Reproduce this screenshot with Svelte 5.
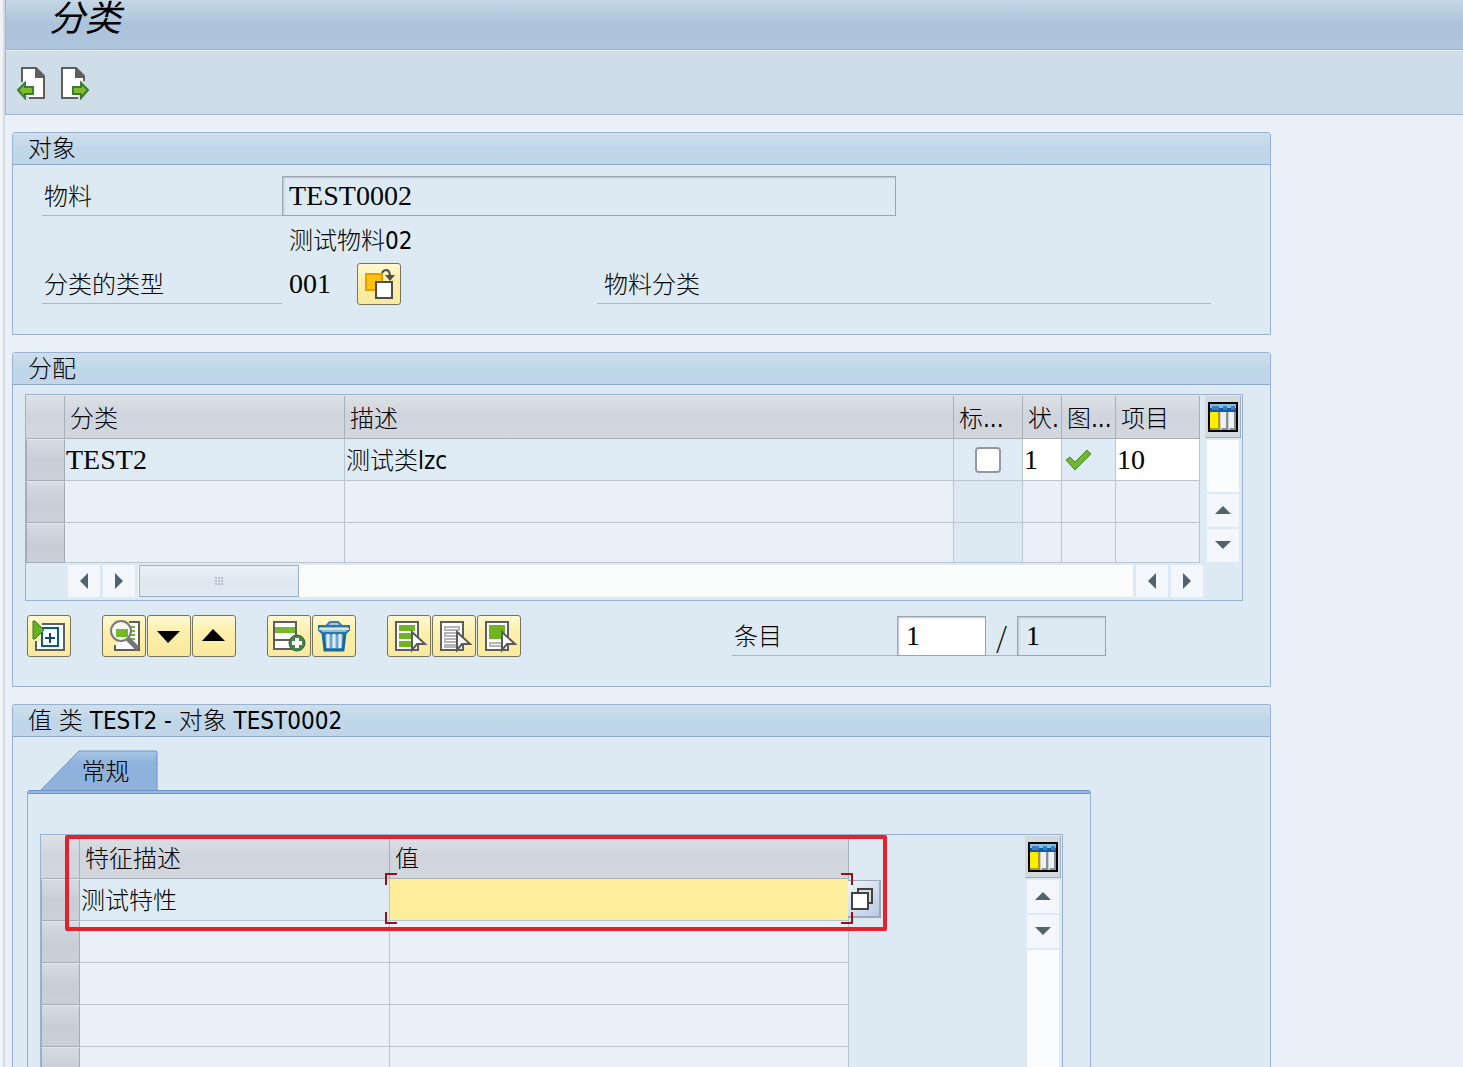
<script lang="ts">
  interface ClassRow {
    name: string;
    description: string;
    standard: boolean;
    status: string;
    item: string;
  }

  const classRows: (ClassRow | null)[] = [
    { name: "TEST2", description: "测试类lzc", standard: false, status: "1", item: "10" },
    null,
    null,
  ];

  const valueRows: (string | null)[] = ["测试特性", null, null, null, null, null];

  const actionGroups = [
    [{ icon: "assign", label: "新分配" }],
    [
      { icon: "find", label: "查找" },
      { icon: "next", label: "下一个" },
      { icon: "previous", label: "上一个" },
    ],
    [
      { icon: "insert", label: "插入行" },
      { icon: "trash", label: "删除" },
    ],
    [
      { icon: "selectAll", label: "全选" },
      { icon: "deselect", label: "取消选择" },
      { icon: "selectBlock", label: "选择块" },
    ],
  ];

  const arrows: Record<string, string> = {
    up: "M0 11 8 3l8 8z",
    down: "M0 3h16l-8 8z",
    left: "M12 0v16L4 8z",
    right: "M4 0v16l8-8z",
  };

  let material = $state("TEST0002");
  let entry = $state("1");
  let entryTotal = $state("1");
  let value = $state("");
</script>

{#snippet arrowButton(dir: string, label: string)}
  <button class="scroll-btn" aria-label={label}>
    <svg width="16" height="16" viewBox="0 0 16 16"><path d={arrows[dir]} fill="#53636e" /></svg>
  </button>
{/snippet}

{#snippet configButton()}
  <button class="config-btn" aria-label="表格设置">
    <svg width="30" height="30" viewBox="0 0 30 30" shape-rendering="crispEdges">
      <path d="M0 0h30v30H0z" fill="#000" />
      <path d="M2 2h26v8H2z" fill="#7fc0e8" />
      <path d="M2 6h26v4H2z" fill="#0a60a8" />
      <path d="M4 4h7v4H4zM15 4h4v4h-4zM23 4h4v4h-4z" fill="#4a78b8" />
      <path d="M2 10h26v18H2z" fill="#c9cfd4" />
      <path d="M2 10h8v16H2z" fill="#ffee00" />
      <path d="M10 10h2v18H2v-2h8z" fill="#b3a000" />
      <path d="M13 10h5v16h-5zM21 10h5v16h-5z" fill="#eef0f2" />
      <path d="M18 10h2v18h-6v-2h4zM26 10h2v18h-6v-2h4z" fill="#888e93" />
    </svg>
  </button>
{/snippet}

{#snippet cursor()}
  <path d="M25 17v18l5-6h8z" fill="#fff" stroke="#595959" stroke-width="2" />
{/snippet}

{#snippet icon(name: string)}
  <svg width="44" height="42" viewBox="0 0 44 42">
    {#if name === "assign"}
      <path d="M9 9h28v26H9z" fill="#fff" stroke="#5e5e5e" stroke-width="2" />
      <path d="M7 7h8v19H7z" fill="#fdf0b4" />
      <path d="M15 13h16v18H15z" fill="#fff" stroke="#005f92" stroke-width="2" />
      <path d="M18 23h10M23 18v10" stroke="#163f86" stroke-width="2" />
      <path d="M6 6v18h2l9-9-9-9z" fill="#6ab023" stroke="#397d25" />
    {:else if name === "find"}
      <path d="M13 7h24v28H13z" fill="#fff" stroke="#5e5e5e" stroke-width="2" />
      <path d="M11 5h16v3H11zM11 8h5v22h-5z" fill="#fdf0ad" />
      <path d="M27 12h6M27 16h6M27 20h6M27 24h6" stroke="#79b928" stroke-width="2" />
      <circle cx="19" cy="16" r="10" fill="#f3f6f2" stroke="#7a7a7a" stroke-width="2" />
      <path d="M14 14h12v8H14z" fill="#76b82a" />
      <path d="m26 24 10 10" stroke="#757575" stroke-width="5" />
    {:else if name === "next"}
      <path d="M10 16h23L21 28z" />
    {:else if name === "previous"}
      <path d="M10 26h23L21 14z" />
    {:else if name === "insert"}
      <path d="M7 7h22v27H7z" fill="#fff" stroke="#5e5e5e" stroke-width="2" />
      <path d="M8 12h20v6H8z" fill="#76b82a" />
      <path d="M7 25h22" stroke="#5e5e5e" stroke-width="2" />
      <circle cx="30" cy="28" r="8" fill="#4d7f4d" stroke="#286a31" />
      <path d="M25 28h10M30 23v10" stroke="#fff" stroke-width="4" />
    {:else if name === "trash"}
      <path d="M11 18h22l-2 17H13z" fill="#6ea5ce" stroke="#176a9d" stroke-width="3" />
      <path d="M16 19v14M22 19v14M28 19v14" stroke="#e2edf6" stroke-width="3" />
      <path d="M14 11l4-4h8l4 4" fill="#a9c6de" stroke="#3b7eae" stroke-width="2" />
      <path d="M7 11h30v4l-3 3H10l-3-3z" fill="#8fbcd9" stroke="#2777ab" stroke-width="2" />
      <path d="M7 14h30" stroke="#e0e6cb" stroke-width="2" />
    {:else if name === "selectAll"}
      <path d="M9 7h22v28H9z" fill="#fff" stroke="#5e5e5e" stroke-width="2" />
      <path d="M12 10h16v6H12zM12 18h16v6H12zM12 26h16v6H12z" fill="#6fb522" />
      {@render cursor()}
    {:else if name === "deselect"}
      <path d="M9 7h22v28H9z" fill="#fff" stroke="#5e5e5e" stroke-width="2" />
      <path d="M13 12h14v3H13zM13 18h14v3H13zM13 24h14v3H13zM13 30h14v2H13z" fill="#fff" stroke="#b5b5b5" stroke-width="2" />
      {@render cursor()}
    {:else if name === "selectBlock"}
      <path d="M9 7h22v28H9z" fill="#fff" stroke="#5e5e5e" stroke-width="2" />
      <path d="M12 10h16v14H12z" fill="#6fb522" />
      <path d="M13 28h14v3H13z" fill="#fff" stroke="#b5b5b5" stroke-width="2" />
      {@render cursor()}
    {:else if name === "classType"}
      <path d="M9 11h16v16H9z" fill="#ffc20e" stroke="#e99b00" stroke-width="2" />
      <path d="M19 19h16v16H19z" fill="#fff" stroke="#4d4d4d" stroke-width="2" />
      <path d="M25 10q1-3 5-3 3 1 3 7" fill="none" stroke="#4d4d4d" stroke-width="2" />
      <path d="M28 12h10l-5 6z" fill="#4d4d4d" />
    {/if}
  </svg>
{/snippet}

<div class="window">
  <header class="title-bar">
    <h1>分类</h1>
  </header>

  <nav class="app-toolbar">
    <button aria-label="上一个对象">
      <svg width="30" height="34" viewBox="0 0 30 34">
        <path d="M5 2h14l8 8v22H5z" fill="#fff" stroke="#5e5e5e" stroke-width="2" />
        <path d="M18 1v11h10z" fill="#5e5e5e" />
        <path d="M3 16h4v17H3zM7 30h5v3H7z" fill="#cfdde8" />
        <path d="m1 24 7-7v4h8v7H8v4z" fill="#80bb2c" stroke="#397d35" stroke-width="2" />
      </svg>
    </button>
    <button aria-label="下一个对象">
      <svg width="30" height="34" viewBox="0 0 30 34">
        <path d="M2 2h14l8 8v22H2z" fill="#fff" stroke="#5e5e5e" stroke-width="2" />
        <path d="M15 1v11h10z" fill="#5e5e5e" />
        <path d="M21 15h5v18h-8v-3z" fill="#cfdde8" />
        <path d="m28 24-7-7v4h-8v7h8v4z" fill="#80bb2c" stroke="#397d35" stroke-width="2" />
      </svg>
    </button>
  </nav>

  <main>
    <section class="panel">
      <h2>对象</h2>
      <div class="object-form">
        <div class="row">
          <label class="label" for="material">物料</label>
          <input id="material" class="field wide fixed" bind:value={material} readonly />
        </div>
        <p class="material-name">测试物料02</p>
        <div class="row">
          <span class="label">分类的类型</span>
          <span class="type-code">001</span>
          <button class="action" aria-label="更改分类类型">{@render icon("classType")}</button>
          <span class="type-text">物料分类</span>
        </div>
      </div>
    </section>

    <section class="panel">
      <h2>分配</h2>
      <div class="grid-frame">
        <div class="grid-body">
          <table>
            <colgroup>
              <col class="c-sel" />
              <col class="c-class" />
              <col />
              <col class="c-std" />
              <col class="c-status" />
              <col class="c-icon" />
              <col class="c-item" />
            </colgroup>
            <thead>
              <tr>
                <th class="corner"></th>
                <th>分类</th>
                <th>描述</th>
                <th>标...</th>
                <th>状.</th>
                <th>图...</th>
                <th>项目</th>
              </tr>
            </thead>
            <tbody>
              {#each classRows as row}
                <tr class:filled={row}>
                  <td class="selector"></td>
                  {#if row}
                    <td class="mono">{row.name}</td>
                    <td>{row.description}</td>
                    <td class="center"><input type="checkbox" checked={row.standard} aria-label="标准类" /></td>
                    <td class="edit"><input class="mono" value={row.status} aria-label="状态" /></td>
                    <td class="center">
                      <svg class="check" width="28" height="24" viewBox="0 0 28 24">
                        <path d="m2 12 4-3 5 5L23 2l4 4-16 16z" fill="#73b72b" stroke="#3f8a35" />
                      </svg>
                    </td>
                    <td class="edit"><input class="mono" value={row.item} aria-label="项目" /></td>
                  {:else}
                    <td></td>
                    <td></td>
                    <td class="tinted"></td>
                    <td></td>
                    <td></td>
                    <td></td>
                  {/if}
                </tr>
              {/each}
            </tbody>
          </table>
          <div class="v-scroll">
            {@render configButton()}
            <div class="v-track"></div>
            {@render arrowButton("up", "向上滚动")}
            {@render arrowButton("down", "向下滚动")}
          </div>
        </div>
        <div class="h-scroll">
          {@render arrowButton("left", "向左滚动")}
          {@render arrowButton("right", "向右滚动")}
          <div class="h-track">
            <div class="thumb">
              <svg width="8" height="8" viewBox="0 0 8 8" shape-rendering="crispEdges">
                <path d="M0 0h2v2H0zM3 0h2v2H3zM6 0h2v2H6zM0 3h2v2H0zM3 3h2v2H3zM6 3h2v2H6zM0 6h2v2H0zM3 6h2v2H3zM6 6h2v2H6z" fill="#b4c1ce" />
              </svg>
            </div>
          </div>
          {@render arrowButton("left", "向左滚动")}
          {@render arrowButton("right", "向右滚动")}
        </div>
      </div>

      <div class="grid-actions">
        {#each actionGroups as group}
          <div class="group">
            {#each group as action}
              <button class="action" aria-label={action.label}>{@render icon(action.icon)}</button>
            {/each}
          </div>
        {/each}
        <div class="entries">
          <label class="label" for="entry">条目</label>
          <input id="entry" class="field small" bind:value={entry} />
          <span class="slash">/</span>
          <input class="field small fixed" bind:value={entryTotal} readonly aria-label="条目总数" />
        </div>
      </div>
    </section>

    <section class="panel values">
      <h2>值 类 TEST2 - 对象 TEST0002</h2>
      <div class="tabs">
        <button class="tab">
          <svg width="119" height="40" viewBox="0 0 119 40">
            <defs>
              <linearGradient id="tab-fill" x1="0" y1="0" x2="0" y2="1">
                <stop offset="0" stop-color="#a9c6e4" />
                <stop offset="0.3" stop-color="#8db2dc" />
                <stop offset="1" stop-color="#90b1da" />
              </linearGradient>
            </defs>
            <path d="M1 41 40 1h77l1 1v39" fill="url(#tab-fill)" stroke="#6a93c4" />
          </svg>
          <span>常规</span>
        </button>
      </div>
      <div class="tab-page">
        <div class="value-frame">
          <table>
            <colgroup>
              <col class="c-sel" />
              <col class="c-trait" />
              <col />
            </colgroup>
            <thead>
              <tr>
                <th class="corner"></th>
                <th>特征描述</th>
                <th>值</th>
              </tr>
            </thead>
            <tbody>
              {#each valueRows as row}
                <tr class:filled={row}>
                  <td class="selector"></td>
                  <td>{row ?? ""}</td>
                  {#if row}
                    <td class="focused">
                      <input bind:value aria-label={row} />
                      <span class="bracket tl"></span>
                      <span class="bracket tr"></span>
                      <span class="bracket bl"></span>
                      <span class="bracket br"></span>
                      <button class="match" aria-label="可能的输入">
                        <svg width="24" height="24" viewBox="0 0 24 24">
                          <path d="M8 2h14v14H8z" fill="#d9dfe3" stroke="#45433f" stroke-width="2" />
                          <path d="M2 6h16v16H2z" fill="#fff" stroke="#45433f" stroke-width="2" />
                        </svg>
                      </button>
                    </td>
                  {:else}
                    <td></td>
                  {/if}
                </tr>
              {/each}
            </tbody>
          </table>
          <div class="v-scroll">
            {@render configButton()}
            {@render arrowButton("up", "向上滚动")}
            {@render arrowButton("down", "向下滚动")}
            <div class="v-track"></div>
          </div>
          <div class="highlight"></div>
        </div>
      </div>
    </section>
  </main>
</div>

<style>
  :global(body) {
    margin: 0;
    background: #eaf0f7;
  }

  .window {
    display: flex;
    flex-direction: column;
    box-sizing: border-box;
    height: 100vh;
    overflow: hidden;
    padding-left: 5px;
    background: linear-gradient(90deg, #f0f3f6 3px, #d5dbe4 3px, #d5dbe4 5px, #eaf0f7 5px);
    color: #000;
    font-family: "DejaVu Sans Condensed", "Noto Sans", "Noto Sans CJK SC", sans-serif;
    font-size: 24px;
    font-weight: 300;
    line-height: 32px;
  }

  button,
  input {
    box-sizing: border-box;
    margin: 0;
    padding: 0;
    border: 0;
    border-radius: 0;
    background: none;
    color: inherit;
    font: inherit;
  }

  button {
    display: flex;
    align-items: center;
    justify-content: center;
    flex-shrink: 0;
  }

  input {
    min-width: 0;
    outline: none;
  }

  svg {
    display: block;
    flex-shrink: 0;
  }

  .title-bar {
    flex-shrink: 0;
    height: 49px;
    border-left: 1px solid #a0b4ca;
    border-bottom: 1px solid #9fb2c8;
    background: linear-gradient(#c5d8e7, #abc3db 50%, #afc5dc);
  }

  h1 {
    margin: 0;
    padding-left: 43px;
    font-size: 36px;
    font-style: italic;
    font-weight: 400;
    line-height: 38px;
  }

  .app-toolbar {
    display: flex;
    align-items: center;
    flex-shrink: 0;
    gap: 13px;
    height: 63px;
    padding-left: 11px;
    border-top: 1px solid #e9f1f8;
    border-left: 1px solid #a0b4ca;
    border-bottom: 1px solid #a3b5c9;
    background: #cfdde8;
  }

  main {
    display: flex;
    flex-direction: column;
    flex: 1;
    gap: 17px;
    min-height: 0;
    padding: 17px 7px 0;
  }

  .panel {
    box-sizing: border-box;
    flex-shrink: 0;
    width: 100%;
    max-width: 1259px;
    border: 1px solid #98b1d0;
    border-radius: 3px 3px 0 0;
    background: #deeaf3;
  }

  h2 {
    height: 31px;
    margin: 0;
    padding-left: 15px;
    border-bottom: 1px solid #8fa9c9;
    background: linear-gradient(#cfdfeb, #c0d6e9 50%, #c2d6ea);
    font-size: 24px;
    font-weight: 300;
    line-height: 33px;
  }

  .object-form {
    padding: 11px 59px 30px 29px;
  }

  .row {
    display: flex;
    align-items: center;
    height: 40px;
  }

  .label {
    box-sizing: border-box;
    flex-shrink: 0;
    width: 240px;
    height: 40px;
    padding-left: 2px;
    border-bottom: 1px solid #aab9c6;
    line-height: 42px;
  }

  .field {
    height: 40px;
    padding: 0 6px;
    border: 1px solid #9aa5b0;
    background: #fff;
    box-shadow: inset 1px 1px 2px #b9c3cd;
    font-family: "Liberation Serif", serif;
    font-size: 28px;
  }

  .field.fixed {
    background: #deeaf3;
  }

  .field.wide {
    flex: 0 1 614px;
  }

  .field.small {
    width: 89px;
    padding-left: 8px;
  }

  .material-name {
    height: 48px;
    margin: 0;
    padding-left: 247px;
    line-height: 50px;
  }

  .type-code {
    flex-shrink: 0;
    width: 68px;
    padding-left: 7px;
    font-family: "Liberation Serif", serif;
    font-size: 28px;
  }

  .type-text {
    box-sizing: border-box;
    flex: 1;
    height: 40px;
    margin-left: 196px;
    padding-left: 7px;
    border-bottom: 1px solid #aab9c6;
    line-height: 42px;
  }

  .action {
    width: 44px;
    height: 42px;
    border: 1px solid #77765c;
    border-radius: 3px;
    background: linear-gradient(#fff9d2, #fdf0ac 40%, #fbe99c);
  }

  .grid-frame {
    margin: 9px 27px 0 12px;
    border: 1px solid #98b1d0;
  }

  .grid-body {
    display: flex;
    gap: 5px;
    padding: 1px 1px 0 0;
  }

  table {
    flex: 1;
    align-self: flex-start;
    width: 100%;
    min-width: 0;
    border-collapse: separate;
    border-spacing: 0;
    table-layout: fixed;
  }

  .c-sel {
    width: 39px;
  }

  .c-class {
    width: 280px;
  }

  .c-std {
    width: 69px;
  }

  .c-status {
    width: 39px;
  }

  .c-icon {
    width: 54px;
  }

  .c-item {
    width: 84px;
  }

  .c-trait {
    width: 310px;
  }

  th,
  td {
    box-sizing: border-box;
    height: 42px;
    padding: 2px 0 0 1px;
    border-right: 1px solid #bbc5cf;
    border-bottom: 1px solid #bbc5cf;
    background: #eaf0f7;
    text-align: left;
    font-weight: 300;
    white-space: nowrap;
    overflow: hidden;
  }

  th {
    height: 43px;
    padding: 4px 0 0 5px;
    border-color: #a7b0ba;
    background: linear-gradient(#dce1e5, #cfd4dd 50%, #d3d8df);
  }

  .filled td {
    background: #deebf5;
  }

  .grid-body tr:last-child td {
    height: 40px;
  }

  .grid-body tr:last-child .tinted,
  td.tinted {
    background: #dce9f2;
  }

  td.selector {
    border: 1px solid #a3acb6;
    border-top-color: #e3e8ed;
    background: linear-gradient(#d5dbe1, #c7ced6 50%, #c9d0d8);
  }

  td.center {
    padding: 0;
  }

  .mono {
    padding-top: 0;
    font-family: "Liberation Serif", serif;
    font-size: 28px;
  }

  .filled td.edit {
    padding-top: 0;
    background: #fff;
  }

  .edit input {
    display: block;
    width: 100%;
  }

  input[type="checkbox"] {
    display: block;
    width: 26px;
    height: 26px;
    margin: 0 auto;
    border: 2px solid #9599a0;
    border-radius: 4px;
    background: #fff;
    appearance: none;
  }

  .check {
    margin-left: 2px;
  }

  .v-scroll {
    display: flex;
    flex-direction: column;
    align-items: center;
    flex-shrink: 0;
    gap: 2px;
    width: 36px;
  }

  .grid-body .v-scroll {
    padding-bottom: 1px;
    box-sizing: border-box;
  }

  .config-btn {
    width: 36px;
    height: 42px;
    border-right: 1px solid #9fb0c4;
    border-bottom: 1px solid #9fb0c4;
    background: #d3d9de;
  }

  .scroll-btn {
    width: 32px;
    height: 33px;
    background: #f3f7fb;
  }

  .v-track {
    flex: 1;
    width: 32px;
    background: #fafbfc;
  }

  .h-scroll {
    display: flex;
    gap: 3px;
    padding: 2px 39px 3px 42px;
  }

  .h-scroll .scroll-btn {
    height: 32px;
  }

  .h-track {
    flex: 1;
    padding: 0 1px;
    background: #fafbfb;
  }

  .thumb {
    display: flex;
    align-items: center;
    justify-content: center;
    box-sizing: border-box;
    width: 160px;
    height: 32px;
    border: 1px solid #9fb0bf;
    background: linear-gradient(#e8f0f7, #dce7f0 60%, #e1ebf4);
  }

  .grid-actions {
    display: flex;
    gap: 31px;
    padding: 14px 164px 29px 14px;
  }

  .group {
    display: flex;
    gap: 1px;
  }

  .entries {
    display: flex;
    align-items: center;
    margin-left: auto;
  }

  .entries .label {
    width: 165px;
  }

  .slash {
    box-sizing: border-box;
    width: 31px;
    height: 40px;
    border-bottom: 1px solid #aab9c6;
    font-family: "Noto Sans CJK SC", sans-serif;
    font-size: 28px;
    line-height: 40px;
    text-align: center;
  }

  .values {
    display: flex;
    flex-direction: column;
    flex: 1 0 0;
    min-height: 0;
    border-bottom: 0;
    overflow: hidden;
  }

  .values h2 {
    flex-shrink: 0;
  }

  .tabs {
    display: flex;
    padding: 13px 0 0 26px;
  }

  .tab {
    display: grid;
    align-items: center;
  }

  .tab svg,
  .tab span {
    grid-area: 1 / 1;
  }

  .tab span {
    padding: 4px 0 0 14px;
  }

  .tab-page {
    box-sizing: border-box;
    flex: 1;
    min-height: 0;
    width: 1064px;
    max-width: 100%;
    margin-left: 14px;
    padding: 44px 27px 0 12px;
    border: solid #98b1d0;
    border-width: 0 1px;
    border-radius: 3px 3px 0 0;
    background: linear-gradient(#6f95c3 1px, #94b5dd 1px, #94b5dd 3px, #6f95c3 3px, #6f95c3 4px, transparent 4px);
  }

  .value-frame {
    display: flex;
    justify-content: space-between;
    position: relative;
    box-sizing: border-box;
    height: 100%;
    padding: 1px 1px 0 0;
    border: 1px solid #98b1d0;
    border-bottom: 0;
  }

  .value-frame table {
    flex: 0 1 808px;
  }

  .filled td.focused {
    position: relative;
    padding: 0;
    background: #feee9c;
    overflow: visible;
  }

  .focused input {
    display: block;
    width: 100%;
    height: 41px;
  }

  .bracket {
    position: absolute;
    width: 10px;
    height: 10px;
    border: 0 solid #98101a;
  }

  .tl {
    top: -6px;
    left: -5px;
    border-width: 2px 0 0 2px;
  }

  .tr {
    top: -6px;
    right: -5px;
    border-width: 2px 2px 0 0;
  }

  .bl {
    bottom: -4px;
    left: -5px;
    border-width: 0 0 2px 2px;
  }

  .br {
    right: -5px;
    bottom: -4px;
    border-width: 0 2px 2px 0;
  }

  .match {
    position: absolute;
    top: 1px;
    left: 100%;
    z-index: -1;
    width: 33px;
    height: 38px;
    padding-right: 4px;
    border: solid #a0a8b3;
    border-width: 1px 2px 2px 0;
    background: linear-gradient(135deg, #f1f5fb, #b7cae6);
  }

  .focused {
    z-index: 1;
  }

  .highlight {
    position: absolute;
    top: 0;
    left: 24px;
    box-sizing: border-box;
    width: 822px;
    height: 96px;
    border: 4px solid #e5222b;
    border-radius: 2px;
    pointer-events: none;
    z-index: 2;
  }
</style>
